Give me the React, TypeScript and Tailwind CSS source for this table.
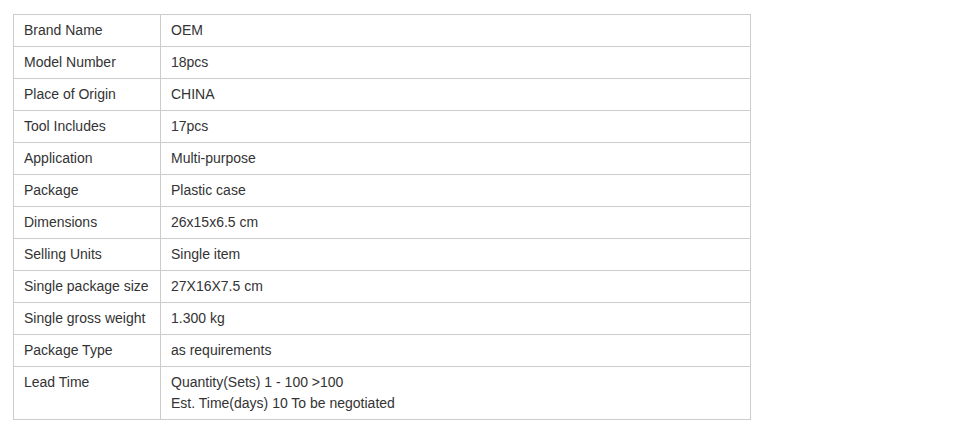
const rows: [string, string[]][] = [
  ["Brand Name", ["OEM"]],
  ["Model Number", ["18pcs"]],
  ["Place of Origin", ["CHINA"]],
  ["Tool Includes", ["17pcs"]],
  ["Application", ["Multi-purpose"]],
  ["Package", ["Plastic case"]],
  ["Dimensions", ["26x15x6.5 cm"]],
  ["Selling Units", ["Single item"]],
  ["Single package size", ["27X16X7.5 cm"]],
  ["Single gross weight", ["1.300 kg"]],
  ["Package Type", ["as requirements"]],
  ["Lead Time", ["Quantity(Sets) 1 - 100 >100", "Est. Time(days) 10 To be negotiated"]],
];

export default function App() {
  return (
    <div className="min-h-[430px] w-[955px] bg-white pt-[14px] pl-[13px] font-['Liberation_Sans',Arial,sans-serif] text-[14px] leading-[21px] text-[#333]">
      <div className="grid w-[738px] grid-cols-[147px_590px] border-l border-t border-[#ccc]">
        {rows.map(([k, v]) => (
          <div key={k} className="contents">
            <div className="border-b border-r border-[#ccc] px-[10px] py-[5px]">{k}</div>
            <div className="border-b border-r border-[#ccc] px-[10px] py-[5px]">
              {v.map((line) => (
                <div key={line}>{line}</div>
              ))}
            </div>
          </div>
        ))}
      </div>
    </div>
  );
}
